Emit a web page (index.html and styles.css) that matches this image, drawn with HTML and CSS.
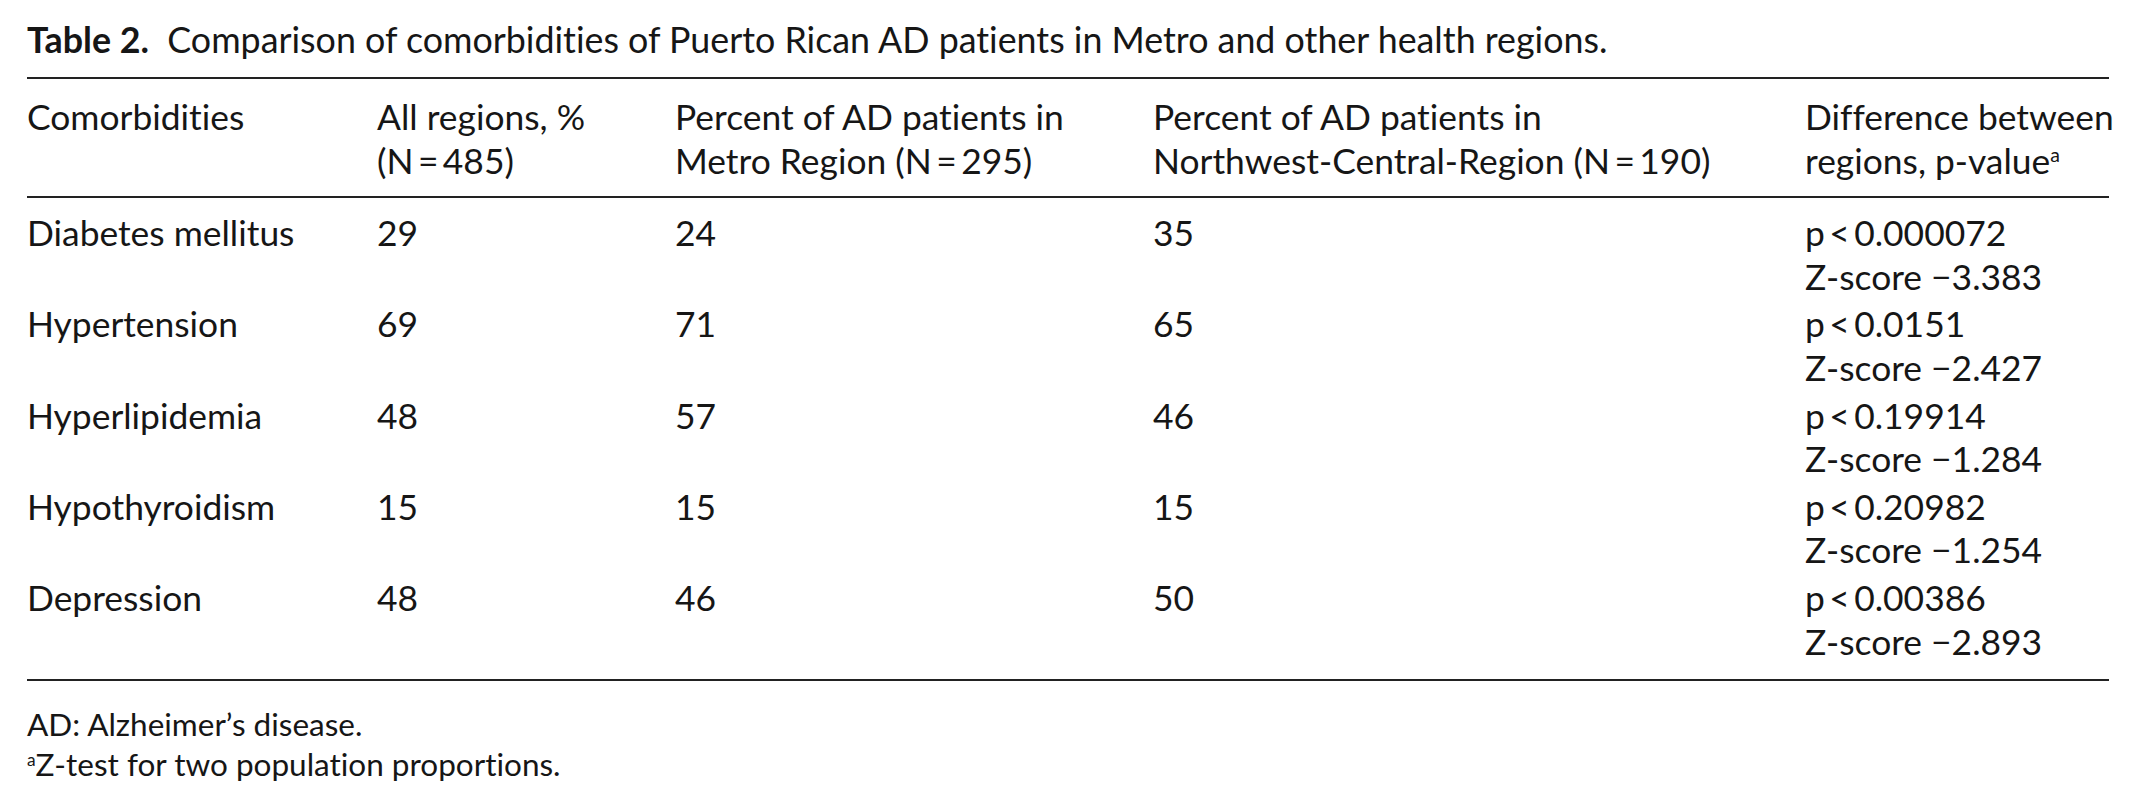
FILE: index.html
```html
<!DOCTYPE html>
<html lang="en">
<head>
<meta charset="utf-8">
<title>Table 2</title>
<link rel="stylesheet" href="styles.css">
</head>
<body>
<figure class="tbl">
  <figcaption class="caption"><span class="label">Table 2.</span>  Comparison of comorbidities of Puerto Rican AD patients in Metro and other health regions.</figcaption>
  <table class="data">
    <colgroup>
      <col class="c1"><col class="c2"><col class="c3"><col class="c4"><col class="c5">
    </colgroup>
    <thead>
      <tr>
        <th>Comorbidities</th>
        <th>All regions, %<br>(N&thinsp;=&thinsp;485)</th>
        <th>Percent of AD patients in<br>Metro Region (N&thinsp;=&thinsp;295)</th>
        <th>Percent of AD patients in<br>Northwest-Central-Region (N&thinsp;=&thinsp;190)</th>
        <th>Difference between<br>regions, p-value<sup>a</sup></th>
      </tr>
    </thead>
    <tbody>
      <tr><td>Diabetes mellitus</td><td>29</td><td>24</td><td>35</td><td>p&thinsp;&lt;&thinsp;0.000072<br>Z-score −3.383</td></tr>
      <tr><td>Hypertension</td><td>69</td><td>71</td><td>65</td><td>p&thinsp;&lt;&thinsp;0.0151<br>Z-score −2.427</td></tr>
      <tr><td>Hyperlipidemia</td><td>48</td><td>57</td><td>46</td><td>p&thinsp;&lt;&thinsp;0.19914<br>Z-score −1.284</td></tr>
      <tr><td>Hypothyroidism</td><td>15</td><td>15</td><td>15</td><td>p&thinsp;&lt;&thinsp;0.20982<br>Z-score −1.254</td></tr>
      <tr><td>Depression</td><td>48</td><td>46</td><td>50</td><td>p&thinsp;&lt;&thinsp;0.00386<br>Z-score −2.893</td></tr>
    </tbody>
  </table>
  <div class="notes">
    <p class="note">AD: Alzheimer’s disease.</p>
    <p class="note"><sup>a</sup>Z-test for two population proportions.</p>
  </div>
</figure>
</body>
</html>
```

FILE: styles.css
```css
html, body {
  margin: 0;
  padding: 0;
  background: #ffffff;
}

body {
  font-family: "Lato", "Open Sans", "Liberation Sans", sans-serif;
  color: #161616;
  font-variant-ligatures: none;
}

.tbl {
  margin: 0;
  padding: 18px 26px 0 27px;
}

.caption {
  font-size: 35.8px;
  line-height: 44px;
  white-space: pre;
  margin-bottom: 15px;
}

.label {
  font-weight: 700;
}

.data {
  width: 2082px;
  border-collapse: collapse;
  table-layout: fixed;
  font-size: 35.4px;
  line-height: 43.6px;
  border-top: 2px solid #222;
  border-bottom: 2px solid #222;
}

.c1 { width: 350px; }
.c2 { width: 298px; }
.c3 { width: 478px; }
.c4 { width: 652px; }
.c5 { width: 304px; }

.data th,
.data td {
  text-align: left;
  vertical-align: top;
  font-weight: 400;
  padding: 2px 0;
  white-space: nowrap;
}

.data th {
  padding-top: 16px;
  padding-bottom: 14px;
  border-bottom: 2px solid #222;
}

.data tbody tr:first-child td {
  padding-top: 13px;
}

.data tbody tr:last-child td {
  padding-bottom: 16px;
}

sup {
  font-size: 0.55em;
  line-height: 0;
  vertical-align: 0.6em;
}

.notes {
  padding-top: 23px;
}

.note {
  margin: 0;
  font-size: 31.5px;
  line-height: 40px;
}
```
